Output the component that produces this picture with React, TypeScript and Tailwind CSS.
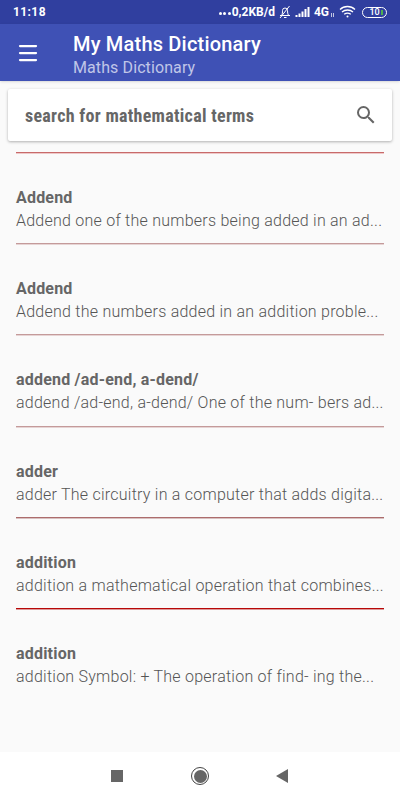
import React, { FC } from 'react'
import { Menu } from 'lucide-react'

type rowType = {
  title: string
  text: string
  line?: string
}

const rows: rowType[] = [
  { title: 'Addend', text: 'Addend one of the numbers being added in an ad...', line: 'border-[#c49a9a] shadow-[0_1px_0_#e6d4d4]' },
  { title: 'Addend', text: 'Addend the numbers added in an addition proble...', line: 'border-[#c49a9a] shadow-[0_1px_0_#e6d4d4]' },
  { title: 'addend /ad-end, a-dend/', text: 'addend /ad-end, a-dend/ One of the num- bers ad...', line: 'border-[#c49a9a] shadow-[0_1px_0_#e6d4d4]' },
  { title: 'adder', text: 'adder The circuitry in a computer that adds digita...', line: 'border-[#ac6c6c] shadow-[0_1px_0_#d8c0c0]' },
  { title: 'addition', text: 'addition a mathematical operation that combines...', line: 'border-[#b80808] shadow-[0_1px_0_#dc9a9a]' },
  { title: 'addition', text: 'addition Symbol: + The operation of find- ing the...' },
]

const StatusBar: FC = () => (
  <div className="flex h-6 items-center justify-between bg-[#303f9f] px-[13px] text-white">
    <span className="text-[12px] font-bold tracking-[0.4px]">11:18</span>
    <div className="flex items-center text-[12px] font-bold">
      <div className="mr-[1px] mt-[3px] flex gap-[1.500px]">
        <div className="h-[3px] w-[3px] rounded-full bg-white" />
        <div className="h-[3px] w-[3px] rounded-full bg-white" />
        <div className="h-[3px] w-[3px] rounded-full bg-white" />
      </div>
      <span>0,2KB/d</span>
      <svg width="14" height="14" viewBox="0 0 14 14" fill="none" stroke="white" strokeWidth="1" className="ml-[3px]">
        <path d="M2 10.500h10M3.500 10.500c1-1.500 1-3 1-5a2.500 2.500 0 0 1 5 0c0 2 .2 3.500 1 5M6 12.500h2.500M2 13 11.500 1" />
      </svg>
      <svg width="16" height="12" viewBox="0 0 16 12" fill="white" className="ml-[3px]">
        <rect x="0.500" y="9" width="2" height="2" />
        <rect x="3.500" y="7.500" width="2" height="3.500" />
        <rect x="6.500" y="5.500" width="2" height="5.500" />
        <rect x="9.500" y="3" width="2" height="8" />
        <rect x="12.500" y="1" width="2" height="10" />
      </svg>
      <span className="ml-[3px]">4G</span>
      <div className="ml-[2px] mr-[5px] mt-[5px] flex gap-[1px]">
        <div className="h-[4px] w-[1px] bg-white/70" />
        <div className="h-[4px] w-[1px] bg-white/70" />
      </div>
      <svg width="17" height="14" viewBox="0 0 17 14" fill="none" stroke="white" strokeWidth="1.300">
        <path d="M1 4.500c4-4 11-4 15 0M3 7c3-2.700 8-2.700 11 0M5.200 9.300c2-1.500 4.600-1.500 6.600 0" />
        <circle cx="8.500" cy="11.500" r="1" fill="white" stroke="none" />
      </svg>
      <div className="relative ml-[6px] flex h-[11px] w-[25px] items-center justify-center rounded-full border border-white">
        <span className="text-[9px] font-medium leading-none">10</span>
        <div className="absolute right-[3px] top-[2px] h-[5px] w-[2px] bg-[#4caf50]" />
      </div>
    </div>
  </div>
)

const App: FC = () => {
  return (
    <div className="flex h-[800px] w-[400px] flex-col overflow-hidden bg-[#fafafa] font-['Roboto',sans-serif]">
      <StatusBar />
      <div className="flex h-[57px] items-center bg-[#3f51b5] shadow-sm">
        <Menu className="ml-[16px] h-6 w-6 text-white" strokeWidth={2.25} />
        <div className="ml-[33px] flex flex-col pt-[5px]">
          <span className="text-[20px] font-medium leading-[24px] tracking-[0.2px] text-white">My Maths Dictionary</span>
          <span className="mt-[2px] text-[16px] leading-[20px] tracking-[0.1px] text-[#c0c6e8]">Maths Dictionary</span>
        </div>
      </div>
      <div className="mx-2 mt-[8px] flex h-[52px] items-center justify-between rounded-[2px] bg-white pl-[17px] pr-[14px] shadow-[0_1px_3px_rgba(0,0,0,0.3)]">
        <span className="pt-[2px] text-[18px] font-bold leading-none tracking-[0.28px] text-[#666666] [font-stretch:condensed]">search for mathematical terms</span>
        <svg width="24" height="24" viewBox="0 0 24 24" fill="#666666">
          <path d="M15.500 14h-.79l-.28-.27A6.470 6.470 0 0 0 16 9.500 6.500 6.500 0 1 0 9.500 16c1.610 0 3.090-.59 4.230-1.570l.27.28v.79l5 4.990L20.490 19l-4.990-5zm-6 0C7.010 14 5 11.990 5 9.500S7.010 5 9.500 5 14 7.010 14 9.500 11.990 14 9.500 14z" />
        </svg>
      </div>
      <div className="mx-4 mt-[11px] border-b border-[#c86a6a] shadow-[0_1px_0_#eec8c8]" />
      {rows.map((row, i) => (
        <div key={i} className={`mx-4 h-[91.200px] shrink-0 pt-[35px] ${row.line ? 'border-b ' + row.line : ''}`}>
          <div className="text-[16px] font-bold leading-[20px] tracking-[0.2px] text-[#666666]">{row.title}</div>
          <div className="mt-[3px] whitespace-nowrap text-[16px] font-light leading-[20px] tracking-[0.24px] text-[#555555]">{row.text}</div>
        </div>
      ))}
      <div className="mt-auto flex h-[48px] shrink-0 items-center bg-white pl-[111px]">
        <div className="h-3 w-3 bg-[#666666]" />
        <div className="ml-[68px] flex h-[18px] w-[18px] items-center justify-center rounded-full border border-[#444444]">
          <div className="h-[13px] w-[13px] rounded-full bg-[#666666]" />
        </div>
        <svg width="12" height="14" viewBox="0 0 12 14" fill="#666666" className="ml-[67px]">
          <polygon points="12,0 12,14 0,7" />
        </svg>
      </div>
    </div>
  )
}

export default App
